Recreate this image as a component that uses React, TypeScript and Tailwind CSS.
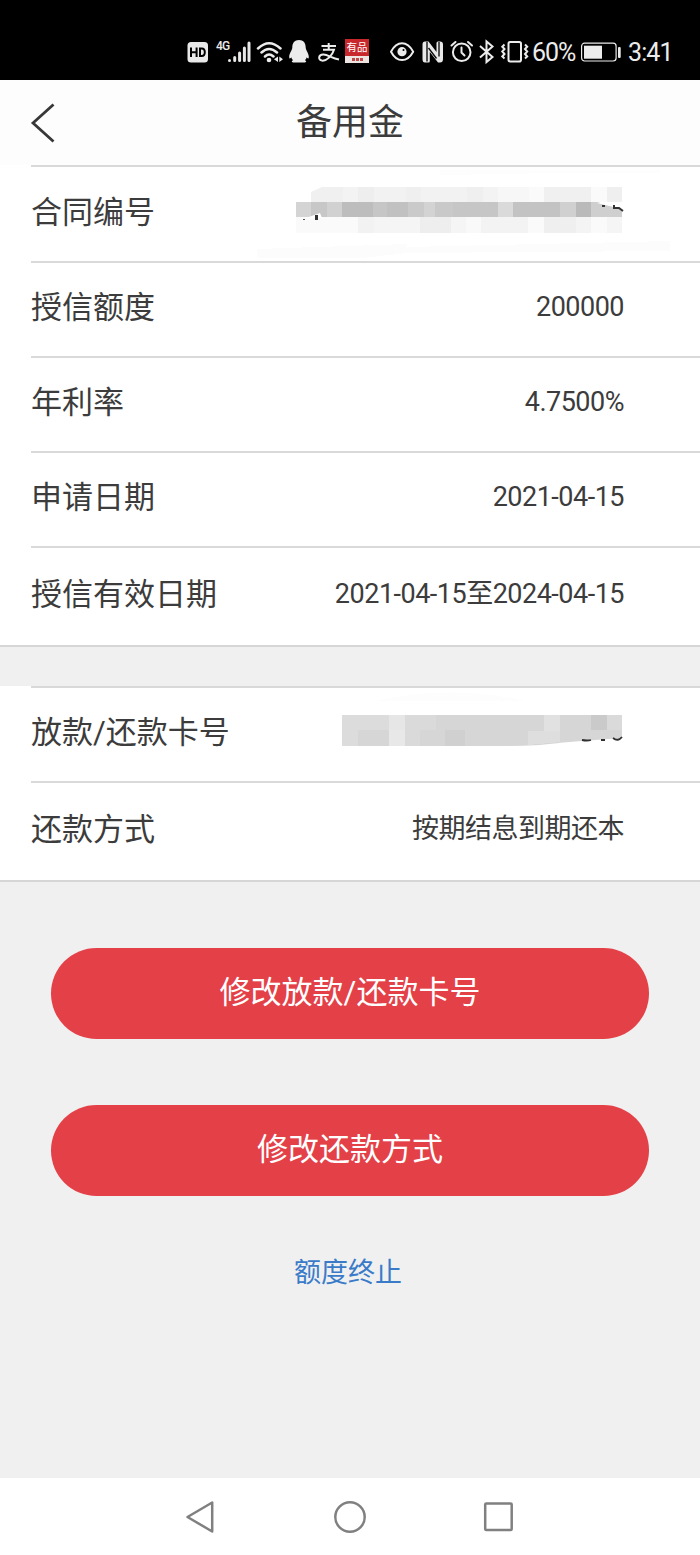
import type { ReactNode } from 'react';

const cjk = "font-['Noto_Sans_CJK_SC',sans-serif] font-normal";
const mixed = "font-['Roboto','Noto_Sans_CJK_SC',sans-serif] font-normal";

function StatusBar() {
  return (
    <header className="flex h-[80px] shrink-0 items-start bg-black pt-[38px] pl-[186px] text-[#ececec]">
      <svg className="h-[28px] w-[24px] shrink-0" viewBox="0 0 24 28">
        <rect x="1.5" y="4" width="20.5" height="20.5" rx="3.5" fill="#e8e8e8" />
        <path d="M5 9.5V19M10.6 9.5V19M5 14.2H10.6M14 10.5V18H15.8Q18.8 18 18.8 14.25Q18.8 10.5 15.8 10.5Z" fill="none" stroke="#000" strokeWidth="2" />
      </svg>
      <span className="ml-[6px] w-[13px] shrink-0 pt-px font-['Roboto',sans-serif] text-[12px] leading-[15px] font-medium tracking-[-0.9px]">4G</span>
      <svg className="-ml-[3px] h-[28px] w-[26px] shrink-0" viewBox="0 0 26 28">
        <path d="M3.5 22.5V22.6M8.7 19.5V22.6M13.6 15V22.6M18.4 10V22.6M23 5V22.6" stroke="#e8e8e8" strokeWidth="3" strokeLinecap="round" />
      </svg>
      <svg className="ml-[4px] h-[28px] w-[28px] shrink-0" viewBox="0 0 28 28">
        <g fill="none" stroke="#ececec" strokeWidth="2.5" strokeLinecap="round">
          <path d="M2 10.5Q13 0 24.500 10.500M5.500 14.500Q13 7.500 21 14.500M9 18.500Q13 14.500 17.500 18.500" />
        </g>
        <circle cx="13" cy="22" r="2.300" fill="#ececec" />
        <path d="M22 18.500V24L18 21.300ZM23.300 18.500V24L27 21.300Z" fill="#ececec" />
      </svg>
      <svg className="ml-[4px] h-[28px] w-[22px] shrink-0" viewBox="0 0 22 28">
        <path d="M11 2C6.500 2 4.300 5 4.300 9.500C4.300 12 1.200 15.500 1.200 18.800C1.200 21.500 2.500 20.500 3.400 19.300C3.600 20.600 4.200 21.500 5.100 22.200C3 23 3.700 24.500 6 24.500H16C18.300 24.500 19 23 16.900 22.200C17.800 21.500 18.400 20.600 18.600 19.300C19.500 20.500 20.800 21.500 20.800 18.800C20.800 15.500 17.700 12 17.700 9.500C17.700 5 15.500 2 11 2Z" fill="#ececec" />
      </svg>
      <svg className="ml-[7px] h-[28px] w-[24px] shrink-0" viewBox="0 0 24 28">
        <path d="M4.500 8H19M11.700 5V11.800M6 11.800H17C15.500 17 10 23.200 5 22.600C0.800 22 1.200 16.300 6.500 16.500C11 16.700 15 20.300 22 21.500" fill="none" stroke="#ececec" strokeWidth="2" />
      </svg>
      <div className={`ml-[4px] mt-px flex h-[24px] w-[24px] shrink-0 flex-col items-center bg-[#c8272b] ${cjk}`}>
        <span className="h-[17px] text-[10.500px] leading-[16px] whitespace-nowrap text-white">有品</span>
        <span className="flex h-[7px] w-full items-center justify-center gap-px bg-[#eee4e1]">
          <i className="h-[3px] w-[3px] bg-[#bd4a48]" />
          <i className="h-[3px] w-[3px] bg-[#bd4a48]" />
          <i className="h-[3px] w-[3px] bg-[#bd4a48]" />
        </span>
      </div>
      <svg className="ml-[20px] h-[28px] w-[26px] shrink-0" viewBox="0 0 26 28">
        <path d="M2 13.700C8 2.500 18 2.500 24.200 13.700C18 24.900 8 24.900 2 13.700Z" fill="none" stroke="#ececec" strokeWidth="2" strokeLinejoin="round" />
        <circle cx="13" cy="13.700" r="4.600" fill="#ececec" />
        <circle cx="14.500" cy="12" r="1" fill="#000" />
      </svg>
      <svg className="ml-[6px] h-[28px] w-[24px] shrink-0" viewBox="0 0 24 28">
        <path d="M4 3.500H7.500L15.500 14V5Q15.500 3.500 17 3.500H19Q22 3.500 22 6.500V21Q22 24.500 19 24.500H17L8.800 14V23Q8.800 24.500 7.500 24.500H4Q1.500 24.500 1.500 21V6.500Q1.500 3.500 4 3.500Z" fill="#e8e8e8" />
        <path d="M6 4V23.500M7.500 10L15.500 20.500M18 4V18.500" stroke="#111" strokeWidth="1.400" />
      </svg>
      <svg className="ml-[5px] h-[28px] w-[24px] shrink-0" viewBox="0 0 24 28">
        <g fill="none" stroke="#ececec" strokeWidth="2" strokeLinecap="round">
          <circle cx="11.700" cy="14.300" r="8.800" />
          <path d="M1.500 7.500L5.500 4M18 4L22 7.500M11.500 9.500V14.500L14.500 17.500" />
        </g>
      </svg>
      <svg className="ml-[4px] h-[28px] w-[17px] shrink-0" viewBox="0 0 17 28">
        <path d="M2 8L14.500 19L8.500 24V3.500L14.500 8.500L2 19.500" fill="none" stroke="#ececec" strokeWidth="2" />
      </svg>
      <svg className="ml-[5px] h-[28px] w-[30px] shrink-0" viewBox="0 0 30 28">
        <rect x="8.500" y="4" width="12.500" height="19.500" rx="1.800" fill="none" stroke="#ececec" strokeWidth="2" />
        <path d="M4.500 6.500L2.300 8.700L4.500 11L2.300 13.500L4.500 16L2.300 18.500L4.500 20.500M25 6.500L27.200 8.700L25 11L27.200 13.500L25 16L27.200 18.500L25 20.500" fill="none" stroke="#ececec" strokeWidth="2" />
      </svg>
      <span className="ml-[2px] w-[44px] shrink-0 font-['Roboto',sans-serif] text-[25px] leading-[30px] tracking-[-1.1px]">60%</span>
      <svg className="ml-[4px] h-[28px] w-[43px] shrink-0" viewBox="0 0 43 28">
        <rect x="1.600" y="5.200" width="34.500" height="17.800" rx="3" fill="none" stroke="#ececec" strokeWidth="1.200" />
        <rect x="4" y="7.700" width="18" height="13" fill="#ececec" />
        <rect x="38" y="9" width="2.700" height="11" rx="1" fill="#ececec" />
      </svg>
      <span className="ml-[5px] shrink-0 font-['Roboto',sans-serif] text-[25px] leading-[30px] tracking-[-0.9px]">3:41</span>
    </header>
  );
}

function Row({ label, children, size = 'h-[95px]' }: { label: string; children: ReactNode; size?: string }) {
  return (
    <div className={`ml-[31px] flex shrink-0 items-center justify-between border-t-2 border-[#d9d9d9] pr-[76px] ${size}`}>
      <span className={`pb-[3px] text-[31px] leading-[44px] whitespace-nowrap ${mixed}`}>{label}</span>
      <span className={`pb-[5px] text-[27px] leading-[40px] tracking-[-0.5px] whitespace-nowrap ${mixed}`}>{children}</span>
    </div>
  );
}

function MaskRow({ label, children, size }: { label: string; children: ReactNode; size: string }) {
  return (
    <div className={`ml-[31px] flex shrink-0 items-center justify-between border-t-2 border-[#d9d9d9] ${size}`}>
      <span className={`pb-[3px] text-[31px] leading-[44px] whitespace-nowrap ${mixed}`}>{label}</span>
      {children}
    </div>
  );
}

type Block = [number, number, string];

const topBlocks: Block[] = [
  [72, 21, '#f0f0f0'], [93, 15, '#f3f3f3'], [108, 16, '#eeeeee'], [124, 32, '#f2f2f2'],
  [156, 15, '#efefef'], [171, 46, '#f2f2f2'], [217, 16, '#efefef'], [233, 15, '#f3f3f3'],
  [248, 31, '#f7f7f7'], [279, 15, '#fafafa'], [294, 47, '#f0f0f0'], [341, 16, '#fafafa'], [357, 15, '#efefef'],
];
const middleBlocks: Block[] = [
  [46, 15, '#d4d4d4'], [61, 16, '#c7c7c7'], [77, 15, '#d1d1d1'], [92, 31, '#bdbdbd'],
  [123, 14, '#c6c6c6'], [137, 21, '#c1c1c1'], [158, 16, '#cacaca'], [174, 11, '#d3d3d3'],
  [185, 18, '#c9c9c9'], [203, 45, '#c6c6c6'], [248, 15, '#dadada'], [263, 47, '#c3c3c3'],
  [310, 16, '#d0d0d0'], [326, 15, '#bababa'],
];
const bottomBlocks: Block[] = [
  [46, 62, '#fafafa'], [108, 16, '#f2f2f2'], [124, 46, '#f5f5f5'], [170, 31, '#eeeeee'],
  [201, 15, '#f5f5f5'], [216, 15, '#f9f9f9'], [231, 47, '#f3f3f3'], [278, 16, '#fafafa'],
  [294, 32, '#efefef'], [326, 15, '#f4f4f4'], [341, 16, '#fafafa'], [357, 15, '#f5f5f5'],
];

function Blocks({ items, y, h }: { items: Block[]; y: number; h: number }) {
  return items.map(([x, w, fill]) => <rect key={x} x={x} y={y} width={w} height={h} fill={fill} />);
}

function ContractMask() {
  return (
    <svg className="block h-[94px] w-[450px]" viewBox="0 0 450 94" shapeRendering="crispEdges">
      <path d="M190 3H410V6H310L190 8Z" fill="#fdfdfd" />
      <path d="M7 82L157 77V86L112 91H7ZM157 80L420 74V84L157 86Z" fill="#fcfcfc" />
      <path d="M61 25L72 20V35H61Z" fill="#f0f0f0" shapeRendering="auto" />
      <Blocks items={topBlocks} y={20} h={15} />
      <Blocks items={middleBlocks} y={35} h={15} />
      <path d="M341 35H347L372 42V50H341Z" fill="#cfcfcf" shapeRendering="auto" />
      <path d="M347 36H372V42Z" fill="#fff" shapeRendering="auto" />
      <Blocks items={bottomBlocks} y={50} h={16} />
      <path d="M56 51L70 46L72 51Z" fill="#fff" shapeRendering="auto" />
      <rect x="65" y="48" width="3" height="5" fill="#333" />
      <rect x="53" y="52" width="2" height="1" fill="#555" />
      <path d="M352 39H355M364 38V41L369 41L373 44" fill="none" stroke="#333" strokeWidth="2" shapeRendering="auto" />
    </svg>
  );
}

function CardMask() {
  return (
    <svg className="block h-[93px] w-[380px]" viewBox="0 0 380 93">
      <path d="M55 13Q130 -4 205 13Z" fill="#fdfdfd" />
      <path d="M22 27H302V50Q245 54 220 57Q200 58 180 58H22Z" fill="#d6d6d6" />
      <g shapeRendering="crispEdges">
        <path d="M22 27H69V42H38V58H22Z" fill="#dcdcdc" />
        <rect x="69" y="27" width="16" height="15" fill="#e6e6e6" />
        <rect x="69" y="42" width="16" height="16" fill="#e8e8e8" />
        <path d="M85 27H116V42H100V58H85Z" fill="#dadada" />
        <rect x="125" y="42" width="20" height="16" fill="#d0d0d0" />
        <rect x="224" y="27" width="16" height="16" fill="#e1e1e1" />
        <path d="M208 43H240V54L208 57Z" fill="#dedede" />
        <rect x="271" y="27" width="16" height="15" fill="#cacaca" />
        <rect x="287" y="27" width="15" height="15" fill="#dadada" />
      </g>
      <path d="M262 52Q267 53 271 52M281 52H285M293 50Q298 54 302 49" fill="none" stroke="#303030" strokeWidth="1.800" />
    </svg>
  );
}

export default function App() {
  return (
    <main className="flex h-[1555px] w-[700px] flex-col overflow-hidden bg-[#f0f0f0] text-[#3c3c3c]">
      <StatusBar />
      <div className="flex h-[85px] shrink-0 items-center bg-[#fdfdfd]">
        <svg className="ml-[29px] h-[44px] w-[30px]" viewBox="0 0 30 44">
          <path d="M24.500 3.500L4 22L24.500 40.500" fill="none" stroke="#383838" strokeWidth="2.800" />
        </svg>
        <h1 className={`ml-[237px] pb-[7px] text-[36px] leading-[50px] whitespace-nowrap ${cjk}`}>备用金</h1>
      </div>
      <section className="flex shrink-0 flex-col border-b-2 border-[#d6d6d6] bg-white">
        <MaskRow label="合同编号" size="h-[96px]"><ContractMask /></MaskRow>
        <Row label="授信额度">200000</Row>
        <Row label="年利率">4.7500%</Row>
        <Row label="申请日期">2021-04-15</Row>
        <Row label="授信有效日期" size="h-[99px]">2021-04-15至2024-04-15</Row>
      </section>
      <section className="mt-[39px] flex shrink-0 flex-col border-b-2 border-[#d6d6d6] bg-white">
        <MaskRow label="放款/还款卡号" size="h-[95px]"><CardMask /></MaskRow>
        <Row label="还款方式" size="h-[99px]">按期结息到期还本</Row>
      </section>
      <div className={`flex flex-1 flex-col items-center pt-[66px] ${mixed}`}>
        <button className="h-[91px] w-[598px] rounded-[46px] bg-[#e44048] pb-px text-[31px] text-white">修改放款/还款卡号</button>
        <button className="mt-[66px] h-[91px] w-[598px] rounded-[46px] bg-[#e44048] text-[31px] text-white">修改还款方式</button>
        <a className="mt-[57px] -ml-[4px] text-[27px] leading-[40px] text-[#3a7bc8]">额度终止</a>
      </div>
      <nav className="flex h-[77px] shrink-0 items-center bg-white pl-[184px]">
        <svg className="h-[36px] w-[32px]" viewBox="0 0 32 36">
          <path d="M28.200 3.500V32.500L3.500 18Z" fill="none" stroke="#808080" strokeWidth="2.500" strokeLinejoin="round" />
        </svg>
        <svg className="ml-[116px] h-[36px] w-[36px]" viewBox="0 0 36 36">
          <circle cx="18" cy="18" r="14.700" fill="none" stroke="#808080" strokeWidth="2.500" />
        </svg>
        <svg className="ml-[114px] h-[36px] w-[34px]" viewBox="0 0 34 36">
          <rect x="3.200" y="4.500" width="26.500" height="26.500" rx="1" fill="none" stroke="#808080" strokeWidth="2.500" />
        </svg>
      </nav>
    </main>
  );
}
